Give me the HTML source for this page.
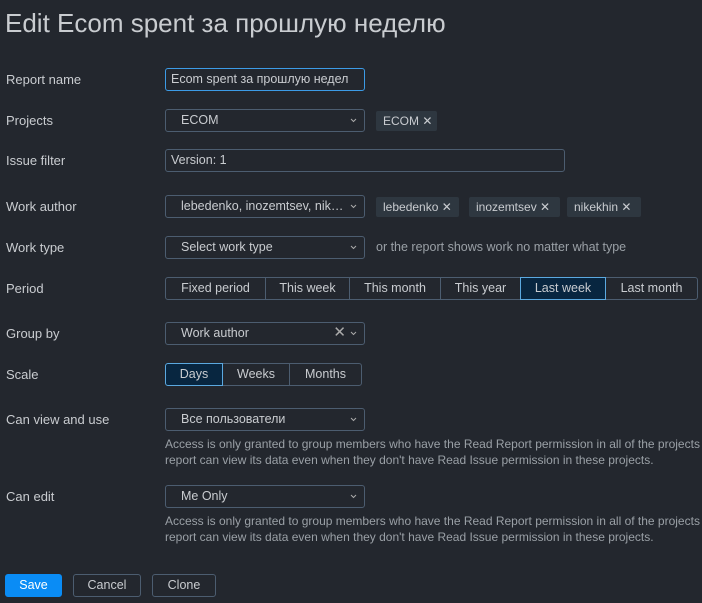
<!DOCTYPE html><html><head><style>
body{margin:0;width:702px;height:603px;background:#23272e;font-family:"Liberation Sans",sans-serif;font-size:12.5px;color:#c9ccd0;position:relative;overflow:hidden}
.a{position:absolute;white-space:nowrap}
.l{left:6px;font-size:13px}
.b{position:absolute;box-sizing:border-box;border:1px solid #4c5d70;border-radius:3px;height:23px;line-height:21px;padding-left:15px;white-space:nowrap;overflow:hidden}
.chev{position:absolute;right:7px;top:8px;width:7px;height:5px}
.chip{position:absolute;background:#2e3740;border-radius:2px;height:20px;line-height:20px;padding:0 7px;font-size:12px;box-sizing:border-box;white-space:nowrap;overflow:hidden}
.seg{position:absolute;display:flex;height:23px;box-sizing:border-box}
.seg div{border:1px solid #4c5d70;margin-left:-1px;box-sizing:border-box;text-align:center;line-height:21px;height:23px;white-space:nowrap}
.seg div:first-child{border-radius:3px 0 0 3px;margin-left:0}
.seg div:last-child{border-radius:0 3px 3px 0}
.seg .on{background:#082640;border-color:#5ba9e0;position:relative;z-index:1}
.h{position:absolute;left:165px;font-size:12px;color:#9aa0a6;line-height:16px;white-space:nowrap}
.btn{position:absolute;top:574px;height:23px;box-sizing:border-box;border:1px solid #4c5d70;border-radius:3px;text-align:center;line-height:21px}
</style></head><body>
<svg width="0" height="0" style="position:absolute"><defs><symbol id="c" viewBox="0 0 7 5"><path d="M1 1l2.5 2.5L6 1" stroke="#aaa" fill="none" stroke-width="1"/></symbol></defs></svg>
<div class="a" style="left:5px;top:8px;font-size:26px;color:#c9ccd0">Edit Ecom spent за прошлую неделю</div>
<div class="a l" style="top:72px">Report name</div>
<div class="b" style="left:165px;top:68px;width:200px;border-color:#3c9be6;padding-left:5px">Ecom spent за прошлую недел</div>
<div class="a l" style="top:113px">Projects</div>
<div class="b" style="left:165px;top:109px;width:200px">ECOM<svg class="chev"><use href="#c"/></svg></div>
<div class="chip" style="left:376px;top:111px;width:61px">ECOM ✕</div>
<div class="a l" style="top:153px">Issue filter</div>
<div class="b" style="left:165px;top:149px;width:400px;padding-left:5px">Version: 1</div>
<div class="a l" style="top:199px">Work author</div>
<div class="b" style="left:165px;top:195px;width:200px">lebedenko, inozemtsev, nik…<svg class="chev"><use href="#c"/></svg></div>
<div class="chip" style="left:376px;top:197px;width:83px">lebedenko ✕</div>
<div class="chip" style="left:469px;top:197px;width:91px">inozemtsev ✕</div>
<div class="chip" style="left:567px;top:197px;width:74px">nikekhin ✕</div>
<div class="a l" style="top:240px">Work type</div>
<div class="b" style="left:165px;top:236px;width:200px">Select work type<svg class="chev"><use href="#c"/></svg></div>
<div class="a" style="left:376px;top:240px;color:#9aa0a6">or the report shows work no matter what type</div>
<div class="a l" style="top:281px">Period</div>
<div class="seg" style="left:165px;top:277px"><div style="width:101px">Fixed period</div><div style="width:85px">This week</div><div style="width:92px">This month</div><div style="width:81px">This year</div><div class="on" style="width:86px">Last week</div><div style="width:93px">Last month</div></div>
<div class="a l" style="top:326px">Group by</div>
<div class="b" style="left:165px;top:322px;width:200px">Work author<span style="position:absolute;right:18px;top:-1px;font-size:15px;color:#aaa">✕</span><svg class="chev"><use href="#c"/></svg></div>
<div class="a l" style="top:367px">Scale</div>
<div class="seg" style="left:165px;top:363px"><div class="on" style="width:58px">Days</div><div style="width:68px">Weeks</div><div style="width:73px">Months</div></div>
<div class="a l" style="top:412px">Can view and use</div>
<div class="b" style="left:165px;top:408px;width:200px">Все пользователи<svg class="chev"><use href="#c"/></svg></div>
<div class="h" style="top:436px">Access is only granted to group members who have the Read Report permission in all of the projects<br>report can view its data even when they don't have Read Issue permission in these projects.</div>
<div class="a l" style="top:489px">Can edit</div>
<div class="b" style="left:165px;top:485px;width:200px">Me Only<svg class="chev"><use href="#c"/></svg></div>
<div class="h" style="top:513px">Access is only granted to group members who have the Read Report permission in all of the projects<br>report can view its data even when they don't have Read Issue permission in these projects.</div>
<div class="btn" style="left:5px;width:57px;background:#0a8cf5;border-color:#0a8cf5;color:#fff">Save</div>
<div class="btn" style="left:73px;width:68px">Cancel</div>
<div class="btn" style="left:152px;width:64px">Clone</div>
</body></html>
